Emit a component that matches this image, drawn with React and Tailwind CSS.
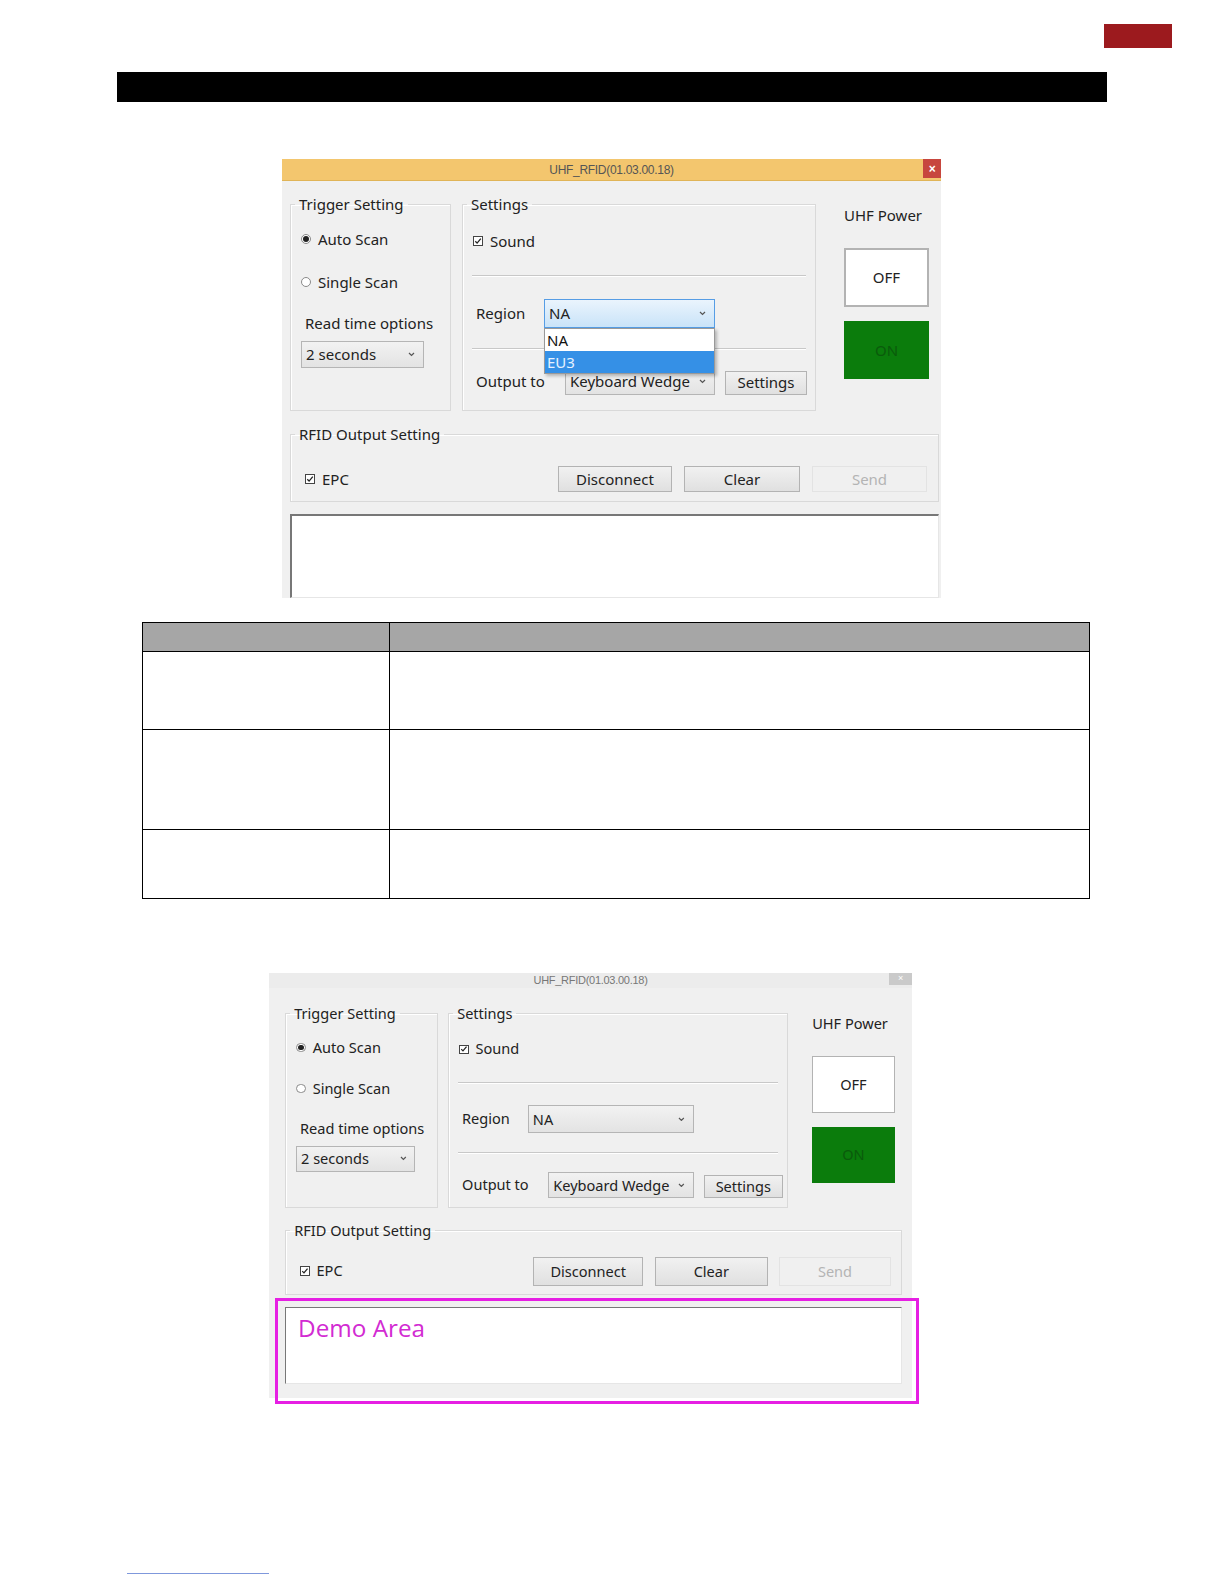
import clsx from "clsx";

function Chevron() {
  return (
    <svg width="7" height="5" viewBox="0 0 7 5" className="shrink-0">
      <path d="M1 1l2.5 2.5L6 1" fill="none" stroke="#555" strokeWidth="1.2" />
    </svg>
  );
}

function Select({ value, className, focused }) {
  return (
    <div
      className={clsx(
        "flex items-center justify-between pl-1 pr-2 text-[15px] leading-none text-[#222]",
        focused
          ? "border border-[#569de5] bg-gradient-to-b from-[#eaf4fd] to-[#c9e3f8]"
          : "border border-[#b5b5b5] bg-gradient-to-b from-[#f2f2f2] to-[#e3e3e3]",
        className
      )}
    >
      <span>{value}</span>
      <Chevron />
    </div>
  );
}

function Button({ children, className, disabled }) {
  return (
    <div
      className={clsx(
        "flex items-center justify-center text-[15px] leading-none",
        disabled
          ? "border border-[#e3e3e3] bg-[#f0f0f0] text-[#b4b4b4]"
          : "border border-[#b3b3b3] bg-gradient-to-b from-[#f1f1f1] to-[#e0e0e0] text-[#222]",
        className
      )}
    >
      {children}
    </div>
  );
}

function Check({ label }) {
  return (
    <div className="flex items-center gap-[7px] text-[15px] text-[#222]">
      <span className="flex h-[10px] w-[10px] items-center justify-center border border-[#444] bg-white">
        <svg width="8" height="8" viewBox="0 0 8 8">
          <path d="M1.3 4.2l1.8 1.9L6.8 1.6" fill="none" stroke="#222" strokeWidth="1.3" />
        </svg>
      </span>
      <span>{label}</span>
    </div>
  );
}

function Radio({ label, checked }) {
  return (
    <div className="flex items-center gap-[7px] text-[15px] text-[#222]">
      <span className="flex h-[10px] w-[10px] items-center justify-center rounded-full border border-[#8a8a8a] bg-white">
        {checked ? <span className="h-[6px] w-[6px] rounded-full bg-[#222]" /> : null}
      </span>
      <span>{label}</span>
    </div>
  );
}

function Separator({ className }) {
  return <div className={clsx("mx-[9px] h-[2px] border-t border-[#c8c8c8] border-b border-b-white", className)} />;
}

function Legend({ children }) {
  return (
    <legend className="ml-[4px] px-[4px] text-[15px] leading-[22px] text-[#222]">{children}</legend>
  );
}

function Window({ second }) {
  const btnH = second ? "h-[30px]" : "h-[26px]";
  return (
    <div className={clsx("relative", second ? "ml-[269px] mt-[74px] w-[643px]" : "ml-[282px] mt-[57px] w-[659px]")}>
      {/* title bar */}
      <div
        className={clsx(
          "relative flex items-center justify-center font-['Liberation_Sans',sans-serif] tracking-tight",
          second
            ? "h-[15px] bg-[#ececec] text-[11px] text-[#777]"
            : "h-[22px] border-b border-[#e0b457] bg-[#f3c66e] text-[12px] text-[#555]"
        )}
      >
        UHF_RFID(01.03.00.18)
        {second ? (
          <div className="absolute right-0 top-0 flex h-[12px] w-[23px] items-center justify-center bg-[#cacaca] text-[9px] text-white">
            ×
          </div>
        ) : (
          <div className="absolute right-0 top-0 flex h-[19px] w-[18px] items-center justify-center bg-[#c7463e] text-[12px] font-bold text-white">
            ×
          </div>
        )}
      </div>

      {/* body */}
      <div
        className={clsx(
          "bg-[#f0f0f0] font-['Noto_Sans','Open_Sans',sans-serif]",
          second
            ? "w-[663px] pb-[15px] pl-[17px] pr-[10px] pt-[15px] [zoom:0.97]"
            : "h-[417px] overflow-hidden pl-2 pr-[2px] pt-[12px]"
        )}
      >
        <div className="flex">
          {/* Trigger setting */}
          <fieldset
            className={clsx(
              "border border-[#d9d9d9] shadow-[inset_1px_1px_0_#fff]",
              second ? "h-[212px] w-[157px]" : "h-[218px] w-[161px]"
            )}
          >
            <Legend>Trigger Setting</Legend>
            <div className="flex flex-col pl-[10px] pt-[13px]">
              <Radio label="Auto Scan" checked />
              <div className="mt-[20px]">
                <Radio label="Single Scan" />
              </div>
              <div className="ml-[4px] mt-[19px] text-[15px] text-[#222]">Read time options</div>
              <Select value="2 seconds" className="mt-[6px] h-[27px] w-[123px]" />
            </div>
          </fieldset>

          {/* Settings */}
          <fieldset
            className={clsx(
              "relative ml-[11px] border border-[#d9d9d9] shadow-[inset_1px_1px_0_#fff]",
              second ? "h-[212px] w-[350px]" : "h-[218px] w-[354px]"
            )}
          >
            <Legend>Settings</Legend>
            <div className="flex flex-col pt-[15px]">
              <div className="pl-[10px]">
                <Check label="Sound" />
              </div>
              <Separator className="mt-[22px]" />
              <div className="relative mt-[22px] flex items-center pl-[13px]">
                <span className="w-[68px] text-[15px] text-[#222]">Region</span>
                <Select value="NA" focused={!second} className="h-[29px] w-[171px]" />
                {second ? null : (
                  <div className="absolute left-[81px] top-[29px] z-10 w-[171px] border border-[#999] bg-white text-[15px] leading-[22px] shadow-[2px_2px_3px_rgba(0,0,0,0.25)]">
                    <div className="pl-[2px] text-[#111]">NA</div>
                    <div className="bg-[#3590e6] pl-[2px] text-[#e6f2ff]">EU3</div>
                  </div>
                )}
              </div>
              <Separator className="mt-[20px]" />
              <div className="mt-[18px] flex items-center pl-[13px]">
                <span className="w-[89px] text-[15px] text-[#222]">Output to</span>
                <Select value="Keyboard Wedge" className="h-[27px] w-[150px]" />
                <Button className="ml-[10px] mt-[3px] h-[24px] w-[82px]">Settings</Button>
              </div>
            </div>
          </fieldset>

          {/* UHF power */}
          <div className={clsx("flex w-[85px] flex-col", second ? "ml-[25px]" : "ml-[28px]")}>
            <div className="mt-[11px] text-[15px] leading-[22px] text-[#222]">UHF Power</div>
            <div className="mt-[22px] flex h-[59px] items-center justify-center border-2 border-[#b3b3b3] bg-white text-[15px] text-[#222]">
              OFF
            </div>
            <div className="mt-[14px] flex h-[58px] items-center justify-center bg-[#0b7c0c] text-[15px] text-[#0a5a0b]">
              ON
            </div>
          </div>
        </div>

        {/* RFID output setting */}
        <fieldset className="mt-[12px] border border-[#d9d9d9] pb-[9px] shadow-[inset_1px_1px_0_#fff]">
          <Legend>RFID Output Setting</Legend>
          <div className={clsx("flex items-center pl-[14px] pr-[11px]", second ? "pt-[16px]" : "pt-[21px]")}>
            <Check label="EPC" />
            <div className="ml-auto flex gap-[12px]">
              <Button className={clsx(btnH, "w-[114px]")}>Disconnect</Button>
              <Button className={clsx(btnH, "w-[116px]")}>Clear</Button>
              <Button disabled className={clsx(btnH, "w-[115px]")}>
                Send
              </Button>
            </div>
          </div>
        </fieldset>

        {/* output text area */}
        <div
          className={clsx(
            "mt-[12px] border-l-2 border-t-2 border-[#777] border-b border-r border-b-[#e6e6e6] border-r-[#e6e6e6] bg-white",
            second ? "h-[79px] pl-[12px] pt-[8px]" : "h-[84px]"
          )}
        >
          {second ? (
            <span className="font-['Open_Sans',sans-serif] text-[25px] leading-none text-[#d22bd2]">Demo Area</span>
          ) : null}
        </div>
      </div>

      {second ? (
        <div className="absolute left-[6px] top-[325px] h-[106px] w-[644px] border-[3px] border-[#e61fe3]" />
      ) : null}
    </div>
  );
}

export default function App() {
  const rows = ["h-[78px]", "h-[100px]", "h-[69px]"];
  return (
    <div className="w-full overflow-hidden bg-white pb-[10px]">
      <div className="pt-[24px]">
        <div className="ml-[1104px] h-[24px] w-[68px] bg-[#9c1a1e]" />
      </div>
      <div className="ml-[117px] mt-[24px] h-[30px] w-[990px] bg-black" />

      <Window />

      <table className="ml-[142px] mt-[24px] w-[948px] border-collapse">
        <tbody>
          <tr className="h-[29px] bg-[#a6a6a6]">
            <td className="w-[247px] border-[1.5px] border-black" />
            <td className="border-[1.5px] border-black" />
          </tr>
          {rows.map((h) => (
            <tr key={h} className={h}>
              <td className="border-[1.5px] border-black" />
              <td className="border-[1.5px] border-black" />
            </tr>
          ))}
        </tbody>
      </table>

      <Window second />

      <div className="ml-[127px] mt-[175px] h-px w-[142px] bg-[#7f98dc]" />
    </div>
  );
}
